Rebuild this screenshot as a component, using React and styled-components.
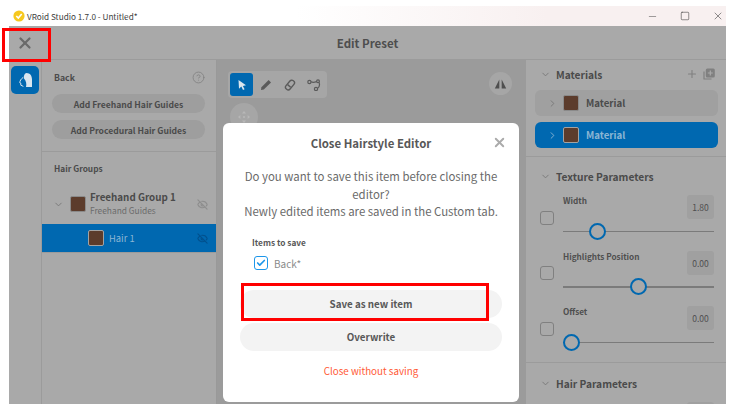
import React from "react"
import styled, { createGlobalStyle } from "styled-components"
import { X, Minus, Square, Check, ChevronDown, ChevronRight, Plus, EyeOff, CircleHelp } from "lucide-react"

const GlobalStyle = createGlobalStyle`
  html, body {
    margin: 0;
    background: #fff;
  }
  body {
    font-family: "Noto Sans CJK JP", "Noto Sans", sans-serif;
    color: #4b4b4b;
  }
`

function HairIcon() {
  return (
    <svg width="16" height="16" viewBox="0 0 16 16">
      <path d="M9.6 1C13 1 15 3.8 15 7.6V15H9C9.8 12 9.2 8.6 6.8 6.2C6.8 3.4 7.4 1.4 9.6 1Z" fill="#d9e6ef" />
      <path d="M6.2 5.4C4 6.8 2.8 9 2.8 10.8L3.8 11.2V13.2L6.4 14.4" fill="none" stroke="#d9e6ef" strokeWidth="1" />
    </svg>
  )
}

function Logo() {
  return (
    <svg width="12" height="12" viewBox="0 0 12 12">
      <circle cx="6" cy="6" r="5.6" fill="#f6c81e" />
      <path d="M3.3 6l2 2.1 3.4-4" fill="none" stroke="#fff" strokeWidth="1.6" />
    </svg>
  )
}

function MirrorIcon() {
  return (
    <svg width="13" height="12" viewBox="0 0 13 12" fill="#4f4f4f">
      <path d="M5.3 1.5V10.5H.8Z" />
      <path d="M7.7 1.5V10.5H12.2Z" />
    </svg>
  )
}

function CopyPlusIcon() {
  return (
    <svg width="12" height="12" viewBox="0 0 12 12">
      <path d="M1 3.5V11H8.5" fill="none" stroke="#808080" strokeWidth="1.2" />
      <rect x="2.8" y="0.5" width="9" height="9" rx="1.5" fill="#808080" />
      <path d="M7.3 2.5V7.5M4.8 5H9.8" stroke="#a9a9a9" strokeWidth="1.2" />
    </svg>
  )
}

function CursorIcon() {
  return (
    <svg width="12" height="12" viewBox="0 0 12 12" fill="#dbe6ee">
      <path d="M2.5 1L10 6.2L6.9 6.9L8.6 10.2L7 11L5.3 7.6L3 9.8Z" />
    </svg>
  )
}

function PencilIcon() {
  return (
    <svg width="12" height="12" viewBox="0 0 12 12" fill="#5a5a5a">
      <path d="M8.6 1L11 3.4L3.8 10.6L1 11L1.4 8.2Z" />
    </svg>
  )
}

function EraserIcon() {
  return (
    <svg width="12" height="12" viewBox="0 0 12 12" fill="none" stroke="#5a5a5a" strokeWidth="1.4">
      <rect x="3.4" y="0.6" width="5.2" height="10.8" rx="2.4" transform="rotate(40 6 6)" />
      <path d="M3.6 5.6L6.6 8.2" />
    </svg>
  )
}

function GuideIcon() {
  return (
    <svg width="14" height="12" viewBox="0 0 14 12" fill="none" stroke="#5a5a5a" strokeWidth="1.2">
      <circle cx="2.4" cy="3" r="1.6" />
      <circle cx="11" cy="2.2" r="1.4" />
      <circle cx="9" cy="10" r="1.6" />
      <path d="M4 2.8C6 3.8 7.6 3.4 9.6 2.6M12 3.4C12.8 5.4 12.4 8 10.6 9.4" />
    </svg>
  )
}

function MoveIcon() {
  return (
    <svg width="14" height="14" viewBox="0 0 14 14" fill="#b8b8b8">
      <circle cx="7" cy="7" r="1" />
      <path d="M7 1L9 3.4H5Z" />
      <path d="M7 13L9 10.6H5Z" />
      <path d="M1 7L3.4 5V9Z" />
      <path d="M13 7L10.6 5V9Z" />
    </svg>
  )
}

// the hair model shows only as a thin strip under the dialog
function HairPreview() {
  return (
    <PreviewStrip width="309" height="5" viewBox="0 0 309 5">
      <path d="M70 5L78 1H290L298 5Z" fill="#b6b5a8" />
      <path d="M120 5L127 0M140 5L146 0M166 5L170 1M196 5L200 1M262 5L266 1M274 5L276 1" stroke="#97ad4e" strokeWidth="1" />
      <path d="M170 3H262" stroke="#a3ba45" strokeWidth="1.5" />
      <path d="M70 5L76 1.5M298 5L292 1.5" stroke="#666" strokeWidth="0.8" />
    </PreviewStrip>
  )
}

function Param({ label, value, pos }) {
  return (
    <ParamRow>
      <ParamCheck />
      <ParamBody>
        <ParamTop>
          <ParamLabel>{label}</ParamLabel>
          <ValueBox>{value}</ValueBox>
        </ParamTop>
        <Slider>
          <Thumb $pos={pos} />
        </Slider>
      </ParamBody>
    </ParamRow>
  )
}

function App() {
  return (
    <>
      <GlobalStyle />
      <Page>
        <Window>
          <TitleBar>
            <TitleLeft>
              <Logo />
              <span>VRoid Studio 1.7.0 - Untitled*</span>
            </TitleLeft>
            <WindowControls>
              <Minus size={11} strokeWidth={1} />
              <Square size={10} strokeWidth={1.3} />
              <X size={12} strokeWidth={1.1} />
            </WindowControls>
          </TitleBar>
          <Shade>
            <TopBar>
              <CloseButton>
                <X size={18} strokeWidth={3} />
              </CloseButton>
              <TopTitle>Edit Preset</TopTitle>
            </TopBar>
            <Main>
              <Rail>
                <RailButton>
                  <HairIcon />
                </RailButton>
              </Rail>
              <LeftPanel>
                <LeftTop>
                  <LeftHead>
                    <span>Back</span>
                    <CircleHelp size={13} strokeWidth={1.5} color="#808080" />
                  </LeftHead>
                  <PillButton>Add Freehand Hair Guides</PillButton>
                  <PillButton>Add Procedural Hair Guides</PillButton>
                </LeftTop>
                <GroupsTitle>Hair Groups</GroupsTitle>
                <GroupRow>
                  <ChevronDown size={11} color="#777" />
                  <GroupSwatch />
                  <GroupText>
                    <GroupName>Freehand Group 1</GroupName>
                    <GroupSub>Freehand Guides</GroupSub>
                  </GroupText>
                  <EyeOff size={11} strokeWidth={2.6} color="#8e8e8e" />
                </GroupRow>
                <HairRow>
                  <Swatch $active />
                  <HairName>Hair 1</HairName>
                  <EyeOff size={11} strokeWidth={2.6} color="#00518e" />
                </HairRow>
                <PanelRule />
              </LeftPanel>
              <Center>
                <ToolGroup>
                  <ToolButton $active>
                    <CursorIcon />
                  </ToolButton>
                  <ToolButton>
                    <PencilIcon />
                  </ToolButton>
                  <ToolButton>
                    <EraserIcon />
                  </ToolButton>
                  <ToolButton>
                    <GuideIcon />
                  </ToolButton>
                </ToolGroup>
                <MirrorButton>
                  <MirrorIcon />
                </MirrorButton>
                <MoveButton>
                  <MoveIcon />
                </MoveButton>
                <HairPreview />
              </Center>
              <RightPanel>
                <MaterialSection>
                  <SectionHead>
                    <ChevronDown size={11} color="#777" />
                    <SectionTitle>Materials</SectionTitle>
                    <HeadIcons>
                      <Plus size={12} color="#808080" strokeWidth={2.2} />
                      <CopyPlusIcon />
                    </HeadIcons>
                  </SectionHead>
                  <MaterialRow>
                    <ChevronRight size={11} color="#777" />
                    <MaterialSwatch />
                    <span>Material</span>
                  </MaterialRow>
                  <MaterialRow $active>
                    <ChevronRight size={11} color="#8cb6d4" />
                    <MaterialSwatch $active />
                    <span>Material</span>
                  </MaterialRow>
                </MaterialSection>
                <TextureSection>
                  <TextureHead>
                    <ChevronDown size={11} color="#777" />
                    <SectionTitle>Texture Parameters</SectionTitle>
                  </TextureHead>
                  <Param label="Width" value="1.80" pos={23} />
                  <Param label="Highlights Position" value="0.00" pos={50} />
                  <Param label="Offset" value="0.00" pos={5.3} />
                </TextureSection>
                <HairSection>
                  <HairHead>
                    <ChevronDown size={11} color="#777" />
                    <SectionTitle>Hair Parameters</SectionTitle>
                  </HairHead>
                  <ClippedBox />
                </HairSection>
              </RightPanel>
            </Main>
          </Shade>
          <Modal>
            <ModalHead>
              <ModalTitle>Close Hairstyle Editor</ModalTitle>
              <ModalClose>
                <X size={15} strokeWidth={3} />
              </ModalClose>
            </ModalHead>
            <ModalText>
              Do you want to save this item before closing the editor?
              <br />
              Newly edited items are saved in the Custom tab.
            </ModalText>
            <ItemsTitle>Items to save</ItemsTitle>
            <ItemRow>
              <ItemCheck>
                <Check size={10} strokeWidth={4} color="#1c96ea" />
              </ItemCheck>
              <span>Back*</span>
            </ItemRow>
            <SaveButton>Save as new item</SaveButton>
            <ModalButton>Overwrite</ModalButton>
            <DangerLink>Close without saving</DangerLink>
          </Modal>
        </Window>
        <CloseMark />
        <SaveMark />
      </Page>
    </>
  )
}

const Page = styled.div`
  position: relative;
  width: 735px;
  height: 409px;
  padding: 6px 9px 5px;
  box-sizing: border-box;
  overflow: hidden;
  background: #fff;
`

const Window = styled.div`
  position: relative;
  display: flex;
  flex-direction: column;
  height: 100%;
  overflow: hidden;
`

const TitleBar = styled.div`
  display: flex;
  align-items: center;
  justify-content: space-between;
  height: 20px;
  flex: none;
  background: linear-gradient(90deg, #fff 0%, #fff 40%, #f8f0f0 75%);
  font-size: 8.2px;
  color: #3d3d3d;
`

const TitleLeft = styled.div`
  display: flex;
  align-items: center;
  gap: 2px;
  padding-left: 4px;
`

const WindowControls = styled.div`
  display: flex;
  align-items: center;
  gap: 22px;
  padding-right: 2.5px;
  color: #333;
`

const Shade = styled.div`
  display: flex;
  flex-direction: column;
  flex: 1;
  min-height: 0;
  background: #a9a9a9;
`

const TopBar = styled.div`
  position: relative;
  display: flex;
  align-items: center;
  justify-content: center;
  height: 34px;
  flex: none;
  border-bottom: 1px solid #9b9b9b;
  box-sizing: border-box;
`

const CloseButton = styled.div`
  position: absolute;
  left: 7px;
  top: 8px;
  display: flex;
  color: #6a6a6a;
`

const TopTitle = styled.div`
  font-size: 11.5px;
  font-weight: 700;
  color: #4e4e4e;
`

const Main = styled.div`
  display: grid;
  grid-template-columns: 33px 175px 309px 200px;
  flex: 1;
  min-height: 0;
`

const Rail = styled.div`
  padding: 6px 0 0 2px;
  border-right: 1px solid #9b9b9b;
`

const RailButton = styled.div`
  display: flex;
  align-items: center;
  justify-content: center;
  width: 28px;
  height: 28px;
  border-radius: 5px;
  background: #0068b0;
`

const LeftPanel = styled.div`
  display: flex;
  flex-direction: column;
  border-right: 1px solid #999;
`

const LeftTop = styled.div`
  display: flex;
  flex-direction: column;
  gap: 7px;
  box-sizing: border-box;
  height: 92px;
  padding: 10px 11px 0 10px;
  border-bottom: 1px solid #9b9b9b;
`

const LeftHead = styled.div`
  display: flex;
  align-items: center;
  justify-content: space-between;
  height: 14px;
  margin-bottom: 3px;
  padding: 0 0 0 2px;
  font-size: 8.7px;
  font-weight: 700;
`

const PillButton = styled.div`
  display: flex;
  align-items: center;
  justify-content: center;
  height: 19px;
  border-radius: 10px;
  background: #9e9e9e;
  font-size: 8.6px;
  font-weight: 700;
  color: #4b4b4b;
`

const GroupsTitle = styled.div`
  margin: 9px 0 0 12px;
  height: 14px;
  font-size: 8.3px;
  font-weight: 700;
  line-height: 14px;
`

const GroupRow = styled.div`
  display: flex;
  align-items: center;
  height: 40px;
  margin-top: 9px;
  padding: 0 8px 0 11px;
`

const Swatch = styled.div`
  flex: none;
  box-sizing: border-box;
  width: 16px;
  height: 16px;
  border-radius: 2px;
  border: 1px solid ${p => (p.$active ? "#a3a3a3" : "#8a8a8a")};
  background: #5c3c2c;
`

const GroupSwatch = styled(Swatch)`
  margin-left: 6px;
`

const MaterialSwatch = styled(Swatch)`
  margin-right: 2px;
`

const GroupText = styled.div`
  flex: 1;
  margin-left: 4px;
`

const GroupName = styled.div`
  font-size: 9.8px;
  font-weight: 700;
  line-height: 13px;
`

const GroupSub = styled.div`
  font-size: 8.4px;
  line-height: 13px;
  color: #6b6b6b;
`

const HairRow = styled.div`
  display: flex;
  align-items: center;
  height: 28px;
  padding: 0 8px 0 46px;
  background: #0068b0;
`

const HairName = styled.div`
  flex: 1;
  margin-left: 5px;
  font-size: 9.4px;
  color: #8cb6d4;
`

const PanelRule = styled.div`
  height: 1px;
  background: #9b9b9b;
`

const Center = styled.div`
  position: relative;
  background: #9b9b9b;
  padding: 11px 0 0 11px;
`

const PreviewStrip = styled.svg`
  position: absolute;
  left: 0;
  bottom: 0;
`

const ToolGroup = styled.div`
  display: flex;
  width: max-content;
  gap: 1px;
  padding: 2px;
  border-radius: 4px;
  background: #a6a6a6;
`

const ToolButton = styled.div`
  display: flex;
  align-items: center;
  justify-content: center;
  width: 23px;
  height: 23px;
  border-radius: 3px;
  background: ${p => (p.$active ? "#0068b0" : "transparent")};
`

const MirrorButton = styled.div`
  position: absolute;
  left: 272px;
  top: 12px;
  display: flex;
  align-items: center;
  justify-content: center;
  width: 23px;
  height: 23px;
  border-radius: 50%;
  background: #a6a6a6;
`

const MoveButton = styled.div`
  display: flex;
  align-items: center;
  justify-content: center;
  width: 28px;
  height: 28px;
  margin: 5px 0 0 2px;
  border-radius: 50%;
  background: #a6a6a6;
`

const RightPanel = styled.div`
  display: flex;
  flex-direction: column;
`

const Section = styled.div`
  box-sizing: border-box;
  padding: 0 8px 0 9px;
  border-bottom: 1px solid #9b9b9b;
`

const MaterialSection = styled(Section)`
  height: 97px;
`

const TextureSection = styled(Section)`
  height: 206px;
`

const HairSection = styled(Section)`
  border-bottom: none;
`

const SectionHead = styled.div`
  display: flex;
  align-items: center;
  gap: 5px;
  height: 16px;
  margin: 6px 0 8px 5px;
  padding-right: 3px;
`

const TextureHead = styled(SectionHead)`
  margin-top: 11px;
  margin-bottom: 11px;
`

const HairHead = styled(SectionHead)`
  margin-top: 12px;
  margin-bottom: 11px;
`

const SectionTitle = styled.div`
  flex: 1;
  font-size: 10.2px;
  font-weight: 700;
  color: #4b4b4b;
`

const HeadIcons = styled.div`
  display: flex;
  align-items: center;
  gap: 5px;
`

const MaterialRow = styled.div`
  display: flex;
  align-items: center;
  gap: 5px;
  height: 26px;
  margin-bottom: 6px;
  padding-left: 12px;
  border-radius: 6px;
  background: ${p => (p.$active ? "#0068b0" : "#a0a0a0")};
  color: ${p => (p.$active ? "#8cb6d4" : "#4b4b4b")};
  font-size: 9.7px;
  font-weight: 700;
`

const ParamRow = styled.div`
  display: flex;
  align-items: center;
  gap: 9px;
  height: 45px;
  margin-bottom: 10.5px;
  padding: 0 4px 0 5px;
`

const ParamCheck = styled.div`
  flex: none;
  box-sizing: border-box;
  width: 14px;
  height: 14px;
  border: 1px solid #808080;
  border-radius: 3px;
`

const ParamBody = styled.div`
  flex: 1;
  align-self: flex-start;
`

const ParamTop = styled.div`
  display: flex;
  align-items: flex-start;
  justify-content: space-between;
  height: 24px;
`

const ParamLabel = styled.div`
  font-size: 8.2px;
  font-weight: 700;
  line-height: 11px;
  color: #4f4f4f;
`

const ValueBox = styled.div`
  display: flex;
  align-items: center;
  justify-content: center;
  width: 27px;
  height: 24px;
  border-radius: 3px;
  background: #a0a0a0;
  font-size: 8.5px;
  color: #4f4f4f;
`

const ClippedBox = styled.div`
  width: 27px;
  height: 24px;
  margin-left: auto;
  margin-right: 4px;
  border-radius: 3px;
  background: #a0a0a0;
`

const Slider = styled.div`
  position: relative;
  height: 1.5px;
  margin-top: 11.5px;
  background: #7b7b7b;
`

const Thumb = styled.div`
  position: absolute;
  top: -8px;
  left: ${p => p.$pos}%;
  box-sizing: border-box;
  width: 17px;
  height: 17px;
  margin-left: -8.5px;
  border: 2px solid #0068b0;
  border-radius: 50%;
  background: #a9a9a9;
`

const Modal = styled.div`
  position: absolute;
  left: 214px;
  top: 117px;
  display: flex;
  flex-direction: column;
  box-sizing: border-box;
  width: 296px;
  height: 279px;
  padding: 0 17px;
  border-radius: 6px;
  background: #fff;
`

const ModalHead = styled.div`
  position: relative;
  display: flex;
  align-items: center;
  justify-content: center;
  height: 40px;
`

const ModalTitle = styled.div`
  font-size: 11.4px;
  font-weight: 700;
  color: #585858;
`

const ModalClose = styled.div`
  position: absolute;
  right: -5px;
  top: 12px;
  display: flex;
  color: #ababab;
`

const ModalText = styled.div`
  margin: 5px 0 0;
  text-align: center;
  font-size: 11.4px;
  line-height: 17.5px;
  color: #6a6a6a;
`

const ItemsTitle = styled.div`
  margin: 15px 0 0 12px;
  font-size: 8.3px;
  font-weight: 700;
  line-height: 13px;
  color: #585858;
`

const ItemRow = styled.div`
  display: flex;
  align-items: center;
  gap: 6px;
  height: 16px;
  margin: 6.5px 0 0 14px;
  font-size: 10px;
  color: #8a8a8a;
`

const ItemCheck = styled.div`
  display: flex;
  align-items: center;
  justify-content: center;
  box-sizing: border-box;
  width: 14px;
  height: 14px;
  border: 1.5px solid #1c96ea;
  border-radius: 3px;
`

const ModalButton = styled.div`
  display: flex;
  align-items: center;
  justify-content: center;
  flex: none;
  height: 28px;
  margin-bottom: 5px;
  border-radius: 14px;
  background: #f3f3f3;
  font-size: 9.8px;
  font-weight: 700;
  color: #585858;
`

const SaveButton = styled(ModalButton)`
  margin-top: 19px;
`

const DangerLink = styled.div`
  margin-top: 8px;
  text-align: center;
  font-size: 9.8px;
  line-height: 14px;
  color: #ff5a36;
`

const CloseMark = styled.div`
  position: absolute;
  left: 2px;
  top: 28px;
  box-sizing: border-box;
  width: 49px;
  height: 34px;
  border: 3px solid #f00;
`

const SaveMark = styled.div`
  position: absolute;
  left: 241px;
  top: 283px;
  box-sizing: border-box;
  width: 248px;
  height: 38px;
  border: 3px solid #f00;
`

export default App
